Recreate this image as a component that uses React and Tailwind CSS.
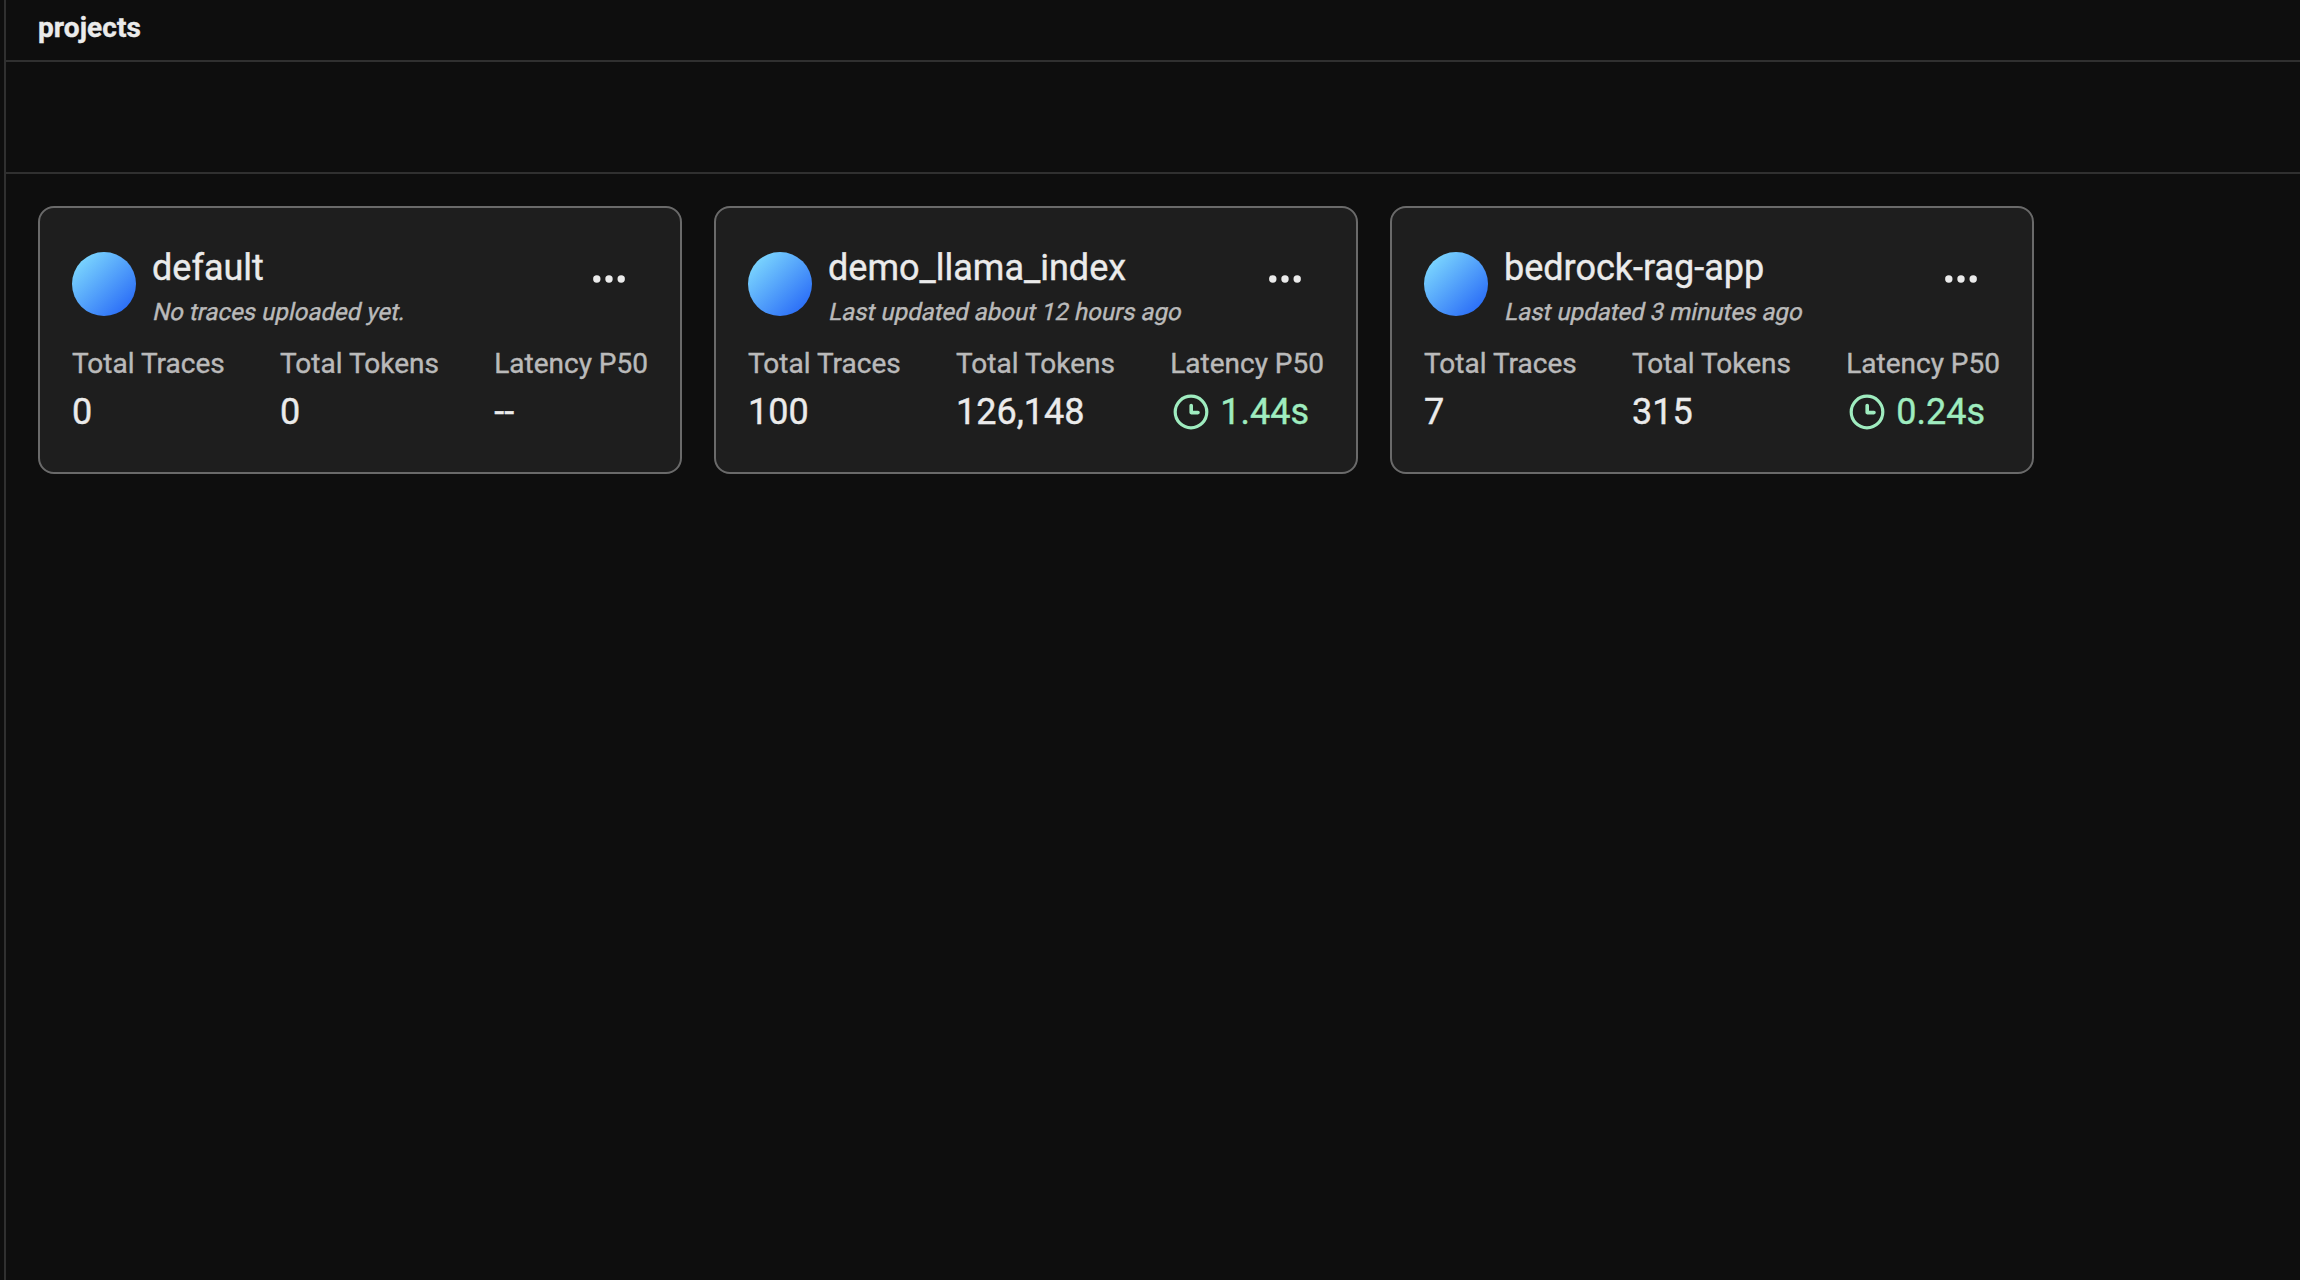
const projects = [
  { name: "default", status: "No traces uploaded yet.", traces: "0", tokens: "0", latency: null },
  {
    name: "demo_llama_index",
    status: "Last updated about 12 hours ago",
    traces: "100",
    tokens: "126,148",
    latency: "1.44s",
  },
  {
    name: "bedrock-rag-app",
    status: "Last updated 3 minutes ago",
    traces: "7",
    tokens: "315",
    latency: "0.24s",
  },
];

function MoreIcon() {
  return (
    <svg className="h-10 w-10" viewBox="0 0 40 40" fill="currentColor" aria-hidden="true">
      <circle cx="7.8" cy="20" r="3.7" />
      <circle cx="20" cy="20" r="3.7" />
      <circle cx="32.2" cy="20" r="3.7" />
    </svg>
  );
}

function ClockIcon() {
  return (
    <svg className="h-10 w-10 shrink-0" viewBox="0 0 40 40" fill="none" stroke="currentColor" aria-hidden="true">
      <circle cx="20" cy="20" r="15.8" strokeWidth="3.2" />
      <path d="M20.2 13.6V20.6H27" strokeWidth="3.6" strokeLinecap="round" strokeLinejoin="round" />
    </svg>
  );
}

function Metric({ label, children }) {
  return (
    <div className="flex flex-col">
      <span className="text-[28px] leading-[42px] text-[#bababa]">{label}</span>
      <span className="flex h-[54px] items-center text-[36px] leading-[54px]">{children}</span>
    </div>
  );
}

function ProjectCard({ project }) {
  return (
    <article className="flex h-[268px] w-[644px] flex-col gap-3 rounded-2xl border-2 border-[#6a6a6a] bg-[#1e1e1e] px-8 pt-[33px] pb-7">
      <div className="flex h-[90px] items-start">
        <div className="mt-[11px] h-16 w-16 shrink-0 rounded-full bg-[linear-gradient(135deg,#88e6ff,#1e5df6)]" />
        <div className="ml-4 flex grow flex-col">
          <h2 className="text-[36px] leading-[54px]">{project.name}</h2>
          <p className="-mt-px w-fit origin-[0_26px] -skew-x-12 text-2xl leading-9 text-[#bababa]">{project.status}</p>
        </div>
        <button className="mt-[18px] mr-[19px]" aria-label="Project actions">
          <MoreIcon />
        </button>
      </div>
      <div className="flex justify-between">
        <Metric label="Total Traces">{project.traces}</Metric>
        <Metric label="Total Tokens">{project.tokens}</Metric>
        <Metric label="Latency P50">
          {project.latency ? (
            <span className="ml-px flex items-center gap-[9px] text-[#9fecbf]">
              <ClockIcon />
              {project.latency}
            </span>
          ) : (
            "--"
          )}
        </Metric>
      </div>
    </article>
  );
}

export default function App() {
  return (
    <div className="flex h-screen bg-[#0e0e0e] pl-1 font-['Roboto',sans-serif] text-[#ebebeb] [-webkit-text-stroke:0.4px_currentColor]">
      <main className="flex grow flex-col border-l-2 border-[#303030]">
        <header className="flex h-[62px] items-center border-b-2 border-[#303030] px-8 pb-1">
          <h1 className="text-[28px] leading-[42px] font-bold tracking-[0.1px]">projects</h1>
        </header>
        <div className="h-28 border-b-2 border-[#303030]" />
        <section className="flex flex-wrap gap-8 p-8">
          {projects.map((project) => (
            <ProjectCard key={project.name} project={project} />
          ))}
        </section>
      </main>
    </div>
  );
}
